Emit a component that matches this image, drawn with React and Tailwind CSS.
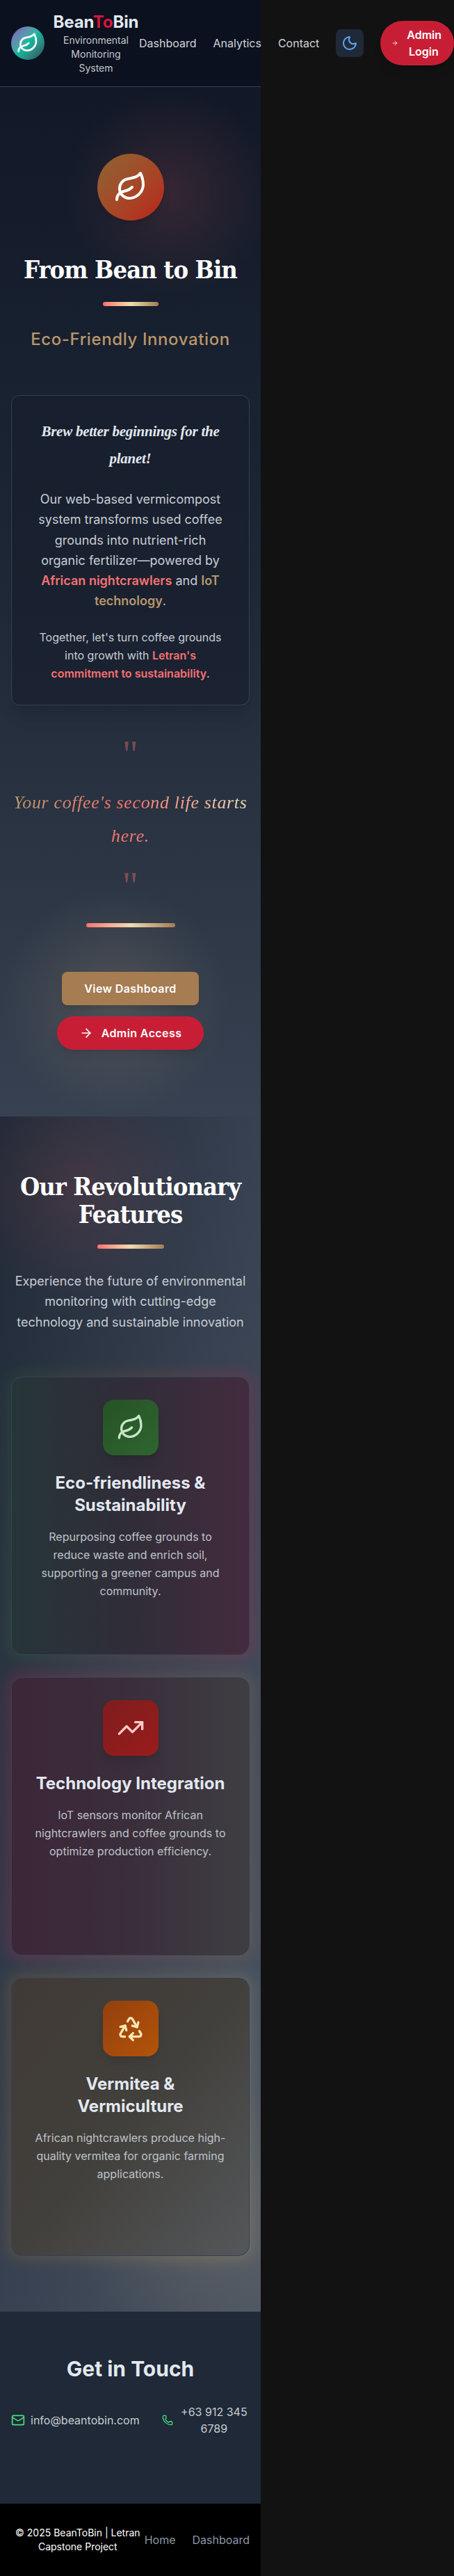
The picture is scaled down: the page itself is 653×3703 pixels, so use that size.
import React from "react";
import { Leaf, Moon, ArrowRight, TrendingUp, Mail, Phone, Recycle } from "lucide-react";

const serif = "font-['DejaVu_Serif_Condensed','DejaVu_Serif',serif]";
const script = "font-['Liberation_Serif',serif]";

function Bar({ className }) {
  return <div className={"rounded-full bg-linear-to-r from-[#f87171] via-[#eddcb1] to-[#a67c52] " + className} />;
}

function Header() {
  return (
    <header className="relative z-10 h-[125px] w-[375px] border-b border-[#374151] bg-[#0b111e]">
      <div className="flex h-[124px] w-[653px] items-center pl-4">
        <div className="flex size-12 shrink-0 items-center justify-center rounded-full bg-linear-to-br from-[#7c4dbd] via-[#06b9a0] to-[#2c4a54]">
          <Leaf className="size-8 text-white" />
        </div>
        <div className="ml-3 w-[124px] shrink-0 text-center">
          <div className="text-2xl font-bold tracking-[-0.1px] text-[#e2e8f0]">
            Bean<span className="text-[#dc143c]">To</span>Bin
          </div>
          <div className="px-2 text-sm text-[#c3c8cf]">Environmental Monitoring System</div>
        </div>
        <nav className="flex shrink-0 items-center gap-6 text-base text-[#cfd3da]">
          <span>Dashboard</span>
          <span>Analytics</span>
          <span>Contact</span>
          <button className="flex size-10 items-center justify-center rounded-lg bg-[#1f2937]">
            <Moon className="size-6 text-[#60a5fa]" />
          </button>
          <button className="flex h-16 w-[106px] items-center rounded-full bg-[#c81e35] pl-4 font-semibold text-white shadow-lg">
            <ArrowRight className="size-[10px] shrink-0" />
            <span className="ml-3 w-12 text-center">Admin Login</span>
          </button>
        </nav>
      </div>
    </header>
  );
}

function Hero() {
  return (
    <section className="relative h-[1480px] overflow-hidden bg-linear-to-b from-[#111827] via-[#1f2937] to-[#374151] text-center">
      <div className="absolute left-[94px] top-[0px] size-[300px] rounded-full bg-[radial-gradient(circle,rgba(220,90,90,0.17),transparent_70%)]" />
      <div className="absolute left-[-5px] top-[1145px] size-[340px] rounded-full bg-[radial-gradient(circle,rgba(190,165,125,0.22),transparent_68%)]" />
      <div className="relative flex flex-col items-center px-4 pt-24">
        <div className="flex size-24 items-center justify-center rounded-full bg-linear-to-br from-[#8b6332] to-[#b91c1c] shadow-lg">
          <Leaf className="size-12 text-white" />
        </div>
        <h1 className={"mt-12 whitespace-nowrap text-[36px] font-bold leading-[45px] tracking-[-0.9px] text-white " + serif}>From Bean to Bin</h1>
        <Bar className="mt-6 h-[6px] w-20" />
        <p className="mt-8 text-2xl font-medium leading-8 tracking-[0.6px] text-[#b8976c]">Eco-Friendly Innovation</p>
        <div className="mt-16 h-[446px] w-[343px] rounded-xl border border-[#334155] bg-[#171d2d]/65 p-8 shadow-xl">
          <p className={"-mx-4 whitespace-nowrap text-[21px] font-bold italic leading-[39px] tracking-[-0.25px] text-[#e2e8f0] " + script}>Brew better beginnings for the<br />planet!</p>
          <p className="-mx-1 mt-6 text-lg leading-[29.25px] text-[#c8ccd3]">
            Our web-based vermicompost<br />system transforms used coffee<br />grounds into nutrient-rich<br />organic fertilizer—powered by<br />
            <b className="font-semibold text-[#f87171]">African nightcrawlers</b> and <b className="font-semibold text-[#b8976c]">IoT<br />technology</b>.
          </p>
          <p className="-mx-1 mt-6 text-base leading-[26px] text-[#c8ccd3]">
            Together, let's turn coffee grounds<br />into growth with <b className="font-semibold text-[#f87171]">Letran's<br />commitment to sustainability</b>.
          </p>
        </div>
        <div className={"mt-[41px] h-[60px] text-[56px] leading-[60px] text-[#f87171]/40 " + script}>"</div>
        <p className={"mt-[15px] whitespace-nowrap bg-linear-to-r from-[#b8976c] via-[#f87171] to-[#eddcb1] bg-clip-text text-[26px] italic leading-[48px] tracking-[0.65px] text-transparent " + script}>
          Your coffee's second life starts<br />here.
        </p>
        <div className={"mt-[18px] h-[60px] text-[56px] leading-[60px] text-[#f87171]/40 " + script}>"</div>
        <Bar className="mt-[23px] h-[6px] w-32" />
        <button className="mt-16 h-12 w-[197px] rounded-lg bg-[#a67c52] font-semibold tracking-[0.4px] text-white shadow-lg">View Dashboard</button>
        <button className="mt-4 flex h-12 w-[211px] items-center justify-center gap-3 rounded-full bg-[#c81e35] font-semibold tracking-[0.4px] text-white shadow-lg">
          <ArrowRight className="size-5" />Admin Access
        </button>
      </div>
    </section>
  );
}

function Feature({ glow, fill, box, icon, title, children }) {
  return (
    <div className="relative h-[400px]">
      <div className={"absolute -inset-1 rounded-2xl opacity-30 blur-md " + glow} />
      <div className={"relative flex h-full flex-col items-center rounded-2xl border border-[#334155] px-8 pt-8 " + fill}>
        <div className={"flex size-20 shrink-0 items-center justify-center rounded-2xl shadow-lg " + box}>{icon}</div>
        <h3 className="mt-6 whitespace-nowrap text-2xl font-bold leading-8 text-[#e2e8f0]">{title}</h3>
        <p className="mt-4 whitespace-nowrap text-base leading-[26px] text-[#bfc2c9]">{children}</p>
      </div>
    </div>
  );
}

function Features() {
  return (
    <section className="relative h-[1717.75px] overflow-hidden bg-linear-to-br from-[#1f2937] via-[#374151] to-[#4b5563] px-4 pt-20 text-center">
      <div className="absolute left-[-65px] top-[-75px] size-[350px] rounded-full bg-[radial-gradient(circle,rgba(220,90,90,0.15),transparent_70%)]" />
      <div className="absolute bottom-[-60px] right-[-120px] size-[400px] rounded-full bg-[radial-gradient(circle,rgba(200,165,110,0.18),transparent_70%)]" />
      <div className="relative">
        <h2 className={"-mx-2 whitespace-nowrap text-[36px] font-bold leading-10 tracking-[-0.95px] text-white " + serif}>Our Revolutionary<br />Features</h2>
        <Bar className="mx-auto mt-6 h-[6px] w-24" />
        <p className="mt-8 whitespace-nowrap text-lg leading-[29.25px] text-[#c8ccd3]">
          Experience the future of environmental<br />monitoring with cutting-edge<br />technology and sustainable innovation
        </p>
        <div className="mt-16 flex flex-col gap-8">
          <Feature glow="bg-linear-to-r from-[#2e6b31] to-[#c81e4a]" fill="bg-linear-to-r from-[#253538] via-[#302d38] to-[#432b3e]"
            box="bg-linear-to-br from-[#275226] to-[#2e652f]" icon={<Leaf className="size-10 text-[#c8e6c9]" />}
            title={<>Eco-friendliness &amp;<br />Sustainability</>}>
            Repurposing coffee grounds to<br />reduce waste and enrich soil,<br />supporting a greener campus and<br />community.
          </Feature>
          <Feature glow="bg-linear-to-r from-[#c81e4a] to-[#a67c52]" fill="bg-linear-to-r from-[#3d2638] via-[#3a2e3b] to-[#3e3e42]"
            box="bg-linear-to-br from-[#7f1d1d] to-[#991b1b]" icon={<TrendingUp className="size-10 text-[#fecaca]" />}
            title="Technology Integration">
            IoT sensors monitor African<br />nightcrawlers and coffee grounds to<br />optimize production efficiency.
          </Feature>
          <Feature glow="bg-linear-to-r from-[#a6782f] to-[#b5a67c]" fill="bg-linear-to-br from-[#403a36] via-[#42403c] to-[#54575a]"
            box="bg-linear-to-br from-[#92400e] to-[#b45309]" icon={<Recycle className="size-10 text-[#fde6b0]" />}
            title={<>Vermitea &amp;<br />Vermiculture</>}>
            African nightcrawlers produce high-<br />quality vermitea for organic farming<br />applications.
          </Feature>
        </div>
      </div>
    </section>
  );
}

function Contact() {
  return (
    <section className="h-[276.25px] bg-[#1f2937] px-4 pt-16 text-center">
      <h2 className="text-[30px] font-bold leading-9 text-[#e2e8f0]">Get in Touch</h2>
      <div className="mt-8 flex items-center text-base text-[#c8ccd3]">
        <Mail className="size-5 shrink-0 text-[#4ade80]" />
        <span className="ml-2">info@beantobin.com</span>
        <Phone className="ml-8 size-4 shrink-0 text-[#4ade80]" />
        <span className="ml-2 flex-1">+63 912 345 6789</span>
      </div>
    </section>
  );
}

export default function App() {
  return (
    <div className="min-h-[3703px] w-[653px] overflow-hidden bg-[#121212] font-['Inter',sans-serif]">
      <div className="w-[375px]">
        <Header />
        <Hero />
        <Features />
        <Contact />
        <footer className="flex h-[104px] items-center bg-black px-4">
          <p className="w-[192px] text-center text-sm text-white">© 2025 BeanToBin | Letran Capstone Project</p>
          <span className="text-base text-[#8b95a3]">Home</span>
          <span className="ml-6 text-base text-[#8b95a3]">Dashboard</span>
        </footer>
      </div>
    </div>
  );
}
